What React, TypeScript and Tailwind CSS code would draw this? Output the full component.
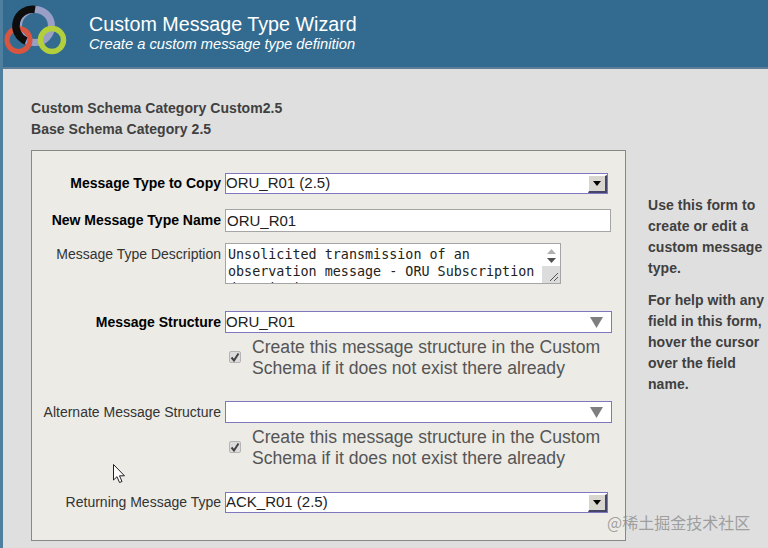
import { ReactNode } from "react";

function Logo() {
  return (
    <svg width="67" height="60" viewBox="0 0 67 60" className="shrink-0">
      <circle cx="32" cy="26" r="16.5" fill="none" stroke="#9a9fc6" strokeWidth="7" />
      <circle cx="15.5" cy="40" r="11.5" fill="none" stroke="#d9553f" strokeWidth="5" />
      <path d="M32 9.5 A16.5 16.5 0 0 0 23 41" fill="none" stroke="#0d0d0d" strokeWidth="7.5" />
      <circle cx="49" cy="40" r="11.5" fill="none" stroke="#b3cf3c" strokeWidth="5.5" />
    </svg>
  );
}

function Arrow({ flat }: { flat?: boolean }) {
  if (flat) {
    return (
      <svg width="13" height="11" viewBox="0 0 13 11" className="mr-[8px] shrink-0">
        <path d="M0 0H13L6.5 11Z" fill="#7f7f7f" />
      </svg>
    );
  }
  return (
    <div className="w-[19px] h-[18px] bg-[#d8d6cf] border-r-2 border-b-2 border-[#45456a] border-t border-l border-t-white border-l-white flex items-center justify-center shrink-0">
      <svg width="8" height="5" viewBox="0 0 8 5">
        <path d="M0 0H8L4 5Z" fill="#000" />
      </svg>
    </div>
  );
}

function Row({ label, bold, nudge, className, children }: { label: string; bold?: boolean; nudge?: boolean; className: string; children: ReactNode }) {
  return (
    <div className={`flex items-start ${className}`}>
      <div className={`w-[189px] shrink-0 text-right text-[14px] leading-[20px] whitespace-nowrap ${nudge ? "pt-px" : ""} ${bold ? "font-bold text-black" : "text-[#333]"}`}>
        {label}
      </div>
      <div className="ml-[4px] flex-1 min-w-0">{children}</div>
    </div>
  );
}

function SelectBox({ value, width, flat, height }: { value: string; width: string; flat?: boolean; height: string }) {
  return (
    <div className={`${width} ${height} bg-white border border-[#7f78c0] flex items-center justify-between text-[15px] text-[#222]`}>
      <span>{value}</span>
      <Arrow flat={flat} />
    </div>
  );
}

function CreateCheck() {
  return (
    <div className="flex items-center mt-[4px]">
      <div className="w-[12px] h-[12px] ml-[4px] mb-[2px] rounded-[2px] bg-[#dcdcdc] border border-[#b5b5b5] flex items-center justify-center shrink-0">
        <svg width="10" height="10" viewBox="0 0 10 10">
          <path d="M1.5 5.5L4 8.5L8.5 1.5" fill="none" stroke="#444" strokeWidth="2" />
        </svg>
      </div>
      <div className="ml-[11px] text-[17.6px] leading-[21px] text-[#555]">
        Create this message structure in the Custom
        <br />
        Schema if it does not exist there already
      </div>
    </div>
  );
}

export default function App() {
  return (
    <div className="relative w-[768px] h-[548px] overflow-hidden bg-[#dfdfdf] border-l-[3px] border-[#4f7f9e] font-['Liberation_Sans',Arial,sans-serif]">
      <header className="h-[69px] bg-[#336b90] border-b-2 border-[#5b7d97] flex items-start">
        <Logo />
        <div className="ml-[19px] pt-[13px] text-white">
          <div className="text-[19.7px] leading-[23px]">Custom Message Type Wizard</div>
          <div className="text-[14.7px] leading-[17px] italic">Create a custom message type definition</div>
        </div>
      </header>

      <div className="pl-[28px] pt-[29px]">
        <div className="text-[14px] leading-[21px] font-bold text-[#404040] tracking-[0.05px]">
          <div>Custom Schema Category Custom2.5</div>
          <div>Base Schema Category 2.5</div>
        </div>

        <div className="flex mt-[10px]">
          <section className="w-[595px] h-[391px] bg-[#ecebe6] border border-[#888] pt-[22px]">
            <Row label="Message Type to Copy" bold className="">
              <SelectBox value="ORU_R01 (2.5)" width="w-[383px]" height="h-[21px]" />
            </Row>
            <Row label="New Message Type Name" bold nudge className="mt-[15px]">
              <input
                readOnly
                value="ORU_R01"
                className="block w-[386px] h-[23px] bg-white border border-[#a5a5a5] text-[15px] text-[#222] px-[1px] outline-none"
              />
            </Row>
            <Row label="Message Type Description" nudge className="mt-[11px]">
              <div className="relative w-[336px] h-[41px] bg-white border border-[#a5a5a5] overflow-hidden font-['DejaVu_Sans_Mono',monospace] text-[13.4px] leading-[17px] text-[#222] pl-[2px] pt-[2px] whitespace-pre">
                {"Unsolicited transmission of an\nobservation message - ORU Subscription\ndescription"}
                <div className="absolute right-0 top-0 w-[18px] h-full bg-white flex flex-col items-center pt-[5px]">
                  <svg width="9" height="5" viewBox="0 0 9 5"><path d="M0 5H9L4.5 0Z" fill="#b0b0b0" /></svg>
                  <svg width="9" height="5" viewBox="0 0 9 5" className="mt-[4px]"><path d="M0 0H9L4.5 5Z" fill="#505050" /></svg>
                  <div className="absolute bottom-0 left-0 w-full h-[17px] bg-[#dcdcdc]">
                    <svg width="18" height="17" viewBox="0 0 18 17">
                      <path d="M8 15L16 7M12 15L16 11" stroke="#555" strokeWidth="1" />
                    </svg>
                  </div>
                </div>
              </div>
            </Row>
            <Row label="Message Structure" bold nudge className="mt-[27px]">
              <SelectBox value="ORU_R01" width="w-[387px]" height="h-[22px]" flat />
              <CreateCheck />
            </Row>
            <Row label="Alternate Message Structure" nudge className="mt-[22px]">
              <SelectBox value="" width="w-[387px]" height="h-[22px]" flat />
              <CreateCheck />
            </Row>
            <Row label="Returning Message Type" className="mt-[23px]">
              <SelectBox value="ACK_R01 (2.5)" width="w-[383px]" height="h-[21px]" />
            </Row>
          </section>

          <aside className="ml-[22px] w-[118px] pt-[45px] text-[14px] leading-[21px] font-bold text-[#404040] tracking-[0.05px]">
            <p>Use this form to create or edit a custom message type.</p>
            <p className="mt-[11px]">For help with any field in this form, hover the cursor over the field name.</p>
          </aside>
        </div>
      </div>

      <svg width="14" height="21" viewBox="0 0 14 21" className="absolute left-[110px] top-[464px]">
        <path d="M0.5 0.5V16L4 12.7L6.5 18.5L9 17.5L6.5 11.8H11.5Z" fill="#fff" stroke="#222" strokeWidth="1" />
      </svg>

      <div className="absolute left-[604px] top-[513px] text-[16px] leading-[18px] text-[#8d8d8d]/80 font-['Noto_Sans_CJK_SC',sans-serif] whitespace-nowrap">
        @稀土掘金技术社区
      </div>
    </div>
  );
}
